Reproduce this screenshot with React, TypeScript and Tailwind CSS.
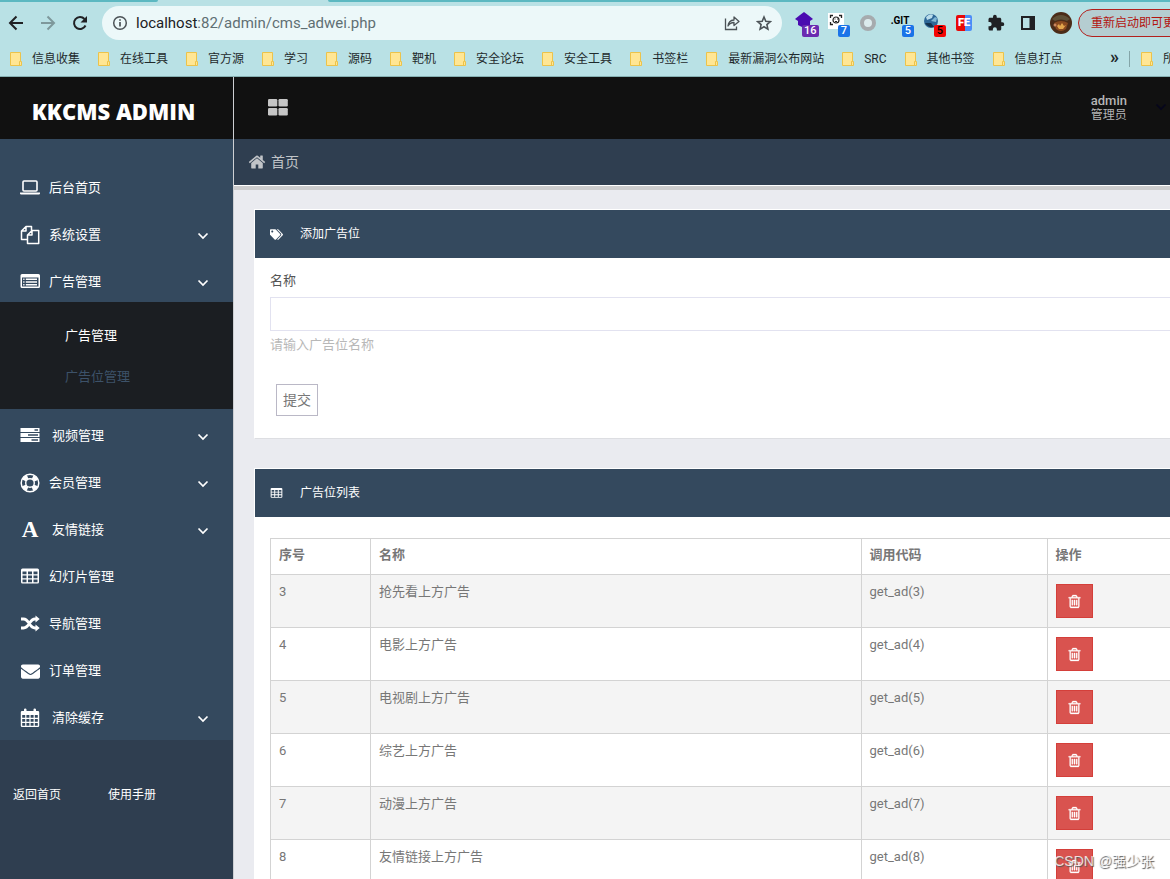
import { ReactNode } from "react";
import { FaEnvelope, FaTags } from "react-icons/fa";

const bookmarks = [
  "信息收集",
  "在线工具",
  "官方源",
  "学习",
  "源码",
  "靶机",
  "安全论坛",
  "安全工具",
  "书签栏",
  "最新漏洞公布网站",
  "SRC",
  "其他书签",
  "信息打点",
];

const ads = [
  { id: 3, name: "抢先看上方广告" },
  { id: 4, name: "电影上方广告" },
  { id: 5, name: "电视剧上方广告" },
  { id: 6, name: "综艺上方广告" },
  { id: 7, name: "动漫上方广告" },
  { id: 8, name: "友情链接上方广告" },
];

/* Icons */

function LaptopIcon() {
  return (
    <svg width="20" height="20" viewBox="0 0 20 20" fill="none">
      <rect x="3" y="3" width="14" height="10" rx="1" stroke="currentColor" strokeWidth="1.6" />
      <path d="M0 14.500h20v1q0 1-1.200 1H1.200Q0 16.500 0 15.500z" fill="currentColor" />
    </svg>
  );
}

function CopyIcon() {
  return (
    <svg width="20" height="20" viewBox="0 0 20 20" fill="none" stroke="currentColor" strokeWidth="1.5" strokeLinejoin="round">
      <path d="M7.500 14.500H1.500V6L6 1.500h5.500v4M6 1.500V6H1.500" />
      <path d="M7.500 18.500V10L12 5.500h6.700v13zM12 5.500V10H7.500" />
    </svg>
  );
}

function ListIcon() {
  return (
    <svg width="20" height="20" viewBox="0 0 20 20" fill="currentColor">
      <path
        fillRule="evenodd"
        d="M2 2h16.500Q20 2 20 3.500v11q0 1.500-1.500 1.500H2Q.5 16 .5 14.500v-11Q.5 2 2 2zM2 5.500v9h16.500v-9z"
      />
      <path d="M3.200 6.500h1.300v1.400H3.200zM3.200 9.300h1.300v1.400H3.200zM3.200 12h1.300v1.400H3.200zM5.800 6.500H17v1.400H5.800zM5.800 9.300H17v1.400H5.800zM5.800 12H17v1.400H5.800z" />
    </svg>
  );
}

function ServerIcon() {
  return (
    <svg width="20" height="20" viewBox="0 0 20 20" fill="currentColor">
      <path
        fillRule="evenodd"
        d="M.5 2h19v4H.5zM14.500 3.300v1.400H18V3.300zM.5 7h19v4H.5zM8 8.300v1.400h10V8.300zM.5 12h19v4H.5zM11.500 13.300v1.400H18v-1.400z"
      />
    </svg>
  );
}

function LifeRingIcon() {
  return (
    <svg width="20" height="20" viewBox="0 0 20 20" fill="none" stroke="currentColor">
      <circle cx="10" cy="10" r="8.800" strokeWidth="1.500" />
      <circle cx="10" cy="10" r="4.300" strokeWidth="1.400" />
      <circle cx="10" cy="10" r="6.600" strokeWidth="4" strokeDasharray="5.180 5.180" strokeDashoffset="-2.590" />
    </svg>
  );
}

function ShuffleIcon() {
  return (
    <svg width="20" height="20" viewBox="0 0 20 20" fill="none">
      <path d="M1 5h2.500C9.500 5 9 14 15 14h1.500M1 14h2.500C9.500 14 9 5 15 5h1.500" stroke="currentColor" strokeWidth="2.800" />
      <path d="M15.500 1.500L19.700 5l-4.200 3.500zM15.500 10.500l4.200 3.500-4.200 3.500z" fill="currentColor" />
    </svg>
  );
}

function TableIcon({ size = 20 }: { size?: number }) {
  return (
    <svg width={size} height={size} viewBox="0 0 20 20" fill="currentColor">
      <path
        fillRule="evenodd"
        d="M2.500 1.500h15Q19 1.500 19 3v12q0 1.500-1.500 1.500h-15Q1 16.500 1 15V3Q1 1.500 2.500 1.500zM2.500 4.500v2.700H6.500V4.500zM8 4.500v2.700h4V4.500zM13.500 4.500v2.700h4V4.500zM2.500 8.500v2.700H6.500V8.500zM8 8.500v2.700h4V8.500zM13.500 8.500v2.700h4V8.500zM2.500 12.500v2.700H6.500V12.500zM8 12.500v2.700h4V12.500zM13.500 12.500v2.700h4V12.500z"
      />
    </svg>
  );
}

function CalendarIcon() {
  return (
    <svg width="20" height="20" viewBox="0 0 20 20" fill="currentColor">
      <path
        fillRule="evenodd"
        d="M2 3h2V1.500Q4 .5 5.200.5T6.500 1.500V3h7V1.500q0-1 1.200-1T16 1.500V3h2q1.200 0 1.200 1.200v13.600Q19.200 19 18 19H2Q.8 19 .8 17.800V4.200Q.8 3 2 3zM2.200 7v2.800h3V7zM6.400 7v2.800h3V7zM10.600 7v2.800h3V7zM14.800 7v2.800h3V7zM2.200 11v2.800h3V11zM6.400 11v2.800h3V11zM10.600 11v2.800h3V11zM14.800 11v2.800h3V11zM2.200 15v2.700h3V15zM6.400 15v2.700h3V15zM10.600 15v2.700h3V15zM14.800 15v2.700h3V15z"
      />
    </svg>
  );
}

function AngleDown({ className = "" }: { className?: string }) {
  return (
    <svg width="16" height="16" viewBox="0 0 16 16" fill="none" stroke="currentColor" strokeWidth="1.700" className={className}>
      <path d="M3.500 6.500L8 11l4.500-4.500" />
    </svg>
  );
}

function HomeIcon() {
  return (
    <svg width="18" height="18" viewBox="0 0 1792 1792" fill="currentColor">
      <path d="M1472 992v480q0 26-19 45t-45 19h-384v-384h-256v384h-384q-26 0-45-19t-19-45v-480q0-1 .5-3t.5-3l575-474 575 474q1 2 1 6zm223-69l-62 74q-8 9-21 11h-3q-13 0-21-7l-692-577-692 577q-12 8-24 7-13-2-21-11l-62-74q-8-10-7-23.500t11-21.500l719-599q32-26 76-26t76 26l244 204v-195q0-14 9-23t23-9h192q14 0 23 9t9 23v408l219 182q10 8 11 21.500t-7 23.500z" />
    </svg>
  );
}

function TrashIcon() {
  return (
    <svg width="15" height="15" viewBox="0 0 1792 1792" fill="currentColor" stroke="currentColor" strokeWidth="40">
      <path d="M704 736v576q0 14-9 23t-23 9h-64q-14 0-23-9t-9-23v-576q0-14 9-23t23-9h64q14 0 23 9t9 23zm256 0v576q0 14-9 23t-23 9h-64q-14 0-23-9t-9-23v-576q0-14 9-23t23-9h64q14 0 23 9t9 23zm256 0v576q0 14-9 23t-23 9h-64q-14 0-23-9t-9-23v-576q0-14 9-23t23-9h64q14 0 23 9t9 23zm128 724v-948h-896v948q0 22 7 40.500t14.500 27 10.500 8.500h832q3 0 10.500-8.500t14.500-27 7-40.500zm-672-1076h448l-48-117q-7-9-17-11h-317q-10 2-17 11zm928 32v64q0 14-9 23t-23 9h-96v948q0 83-47 143.500t-113 60.500h-832q-66 0-113-58.500t-47-141.500v-952h-96q-14 0-23-9t-9-23v-64q0-14 9-23t23-9h309l70-167q15-37 54-63t79-26h320q40 0 79 26t54 63l70 167h309q14 0 23 9t9 23z" />
    </svg>
  );
}

function FolderIcon() {
  return (
    <svg width="12" height="14" viewBox="0 0 12 14" className="shrink-0">
      <path d="M.5.5h10v9h1v4H.5z" fill="#ffe694" stroke="#ecc34a" />
      <path d="M9.500 13V9.500h1" fill="none" stroke="#ecc34a" />
    </svg>
  );
}

/* Browser bars */

function Badge({ children, className }: { children: ReactNode; className: string }) {
  return (
    <span
      className={`absolute top-3 left-2 h-3 px-0.5 rounded-xs text-[11px] leading-3 font-medium text-center font-['Roboto'] ${className}`}
    >
      {children}
    </span>
  );
}

function Extensions() {
  return (
    <div className="flex items-center gap-3 w-[376px] ml-3 shrink-0 overflow-hidden">
      <button aria-label="Layers" className="relative w-5 h-7 pb-1 shrink-0">
        <svg width="20" height="20" viewBox="0 0 20 20" fill="#4a0bb0">
          <path d="M10 1l4 3 5 4-3 2v4l-6 3-6-3v-4L1 8l5-4z" />
        </svg>
        <Badge className="mt-1 min-w-4 bg-[#6a2bb0] text-white">16</Badge>
      </button>
      <button aria-label="Capture" className="relative w-5 h-7 pb-1 shrink-0">
        <svg width="18" height="18" viewBox="0 0 18 18" fill="none" stroke="#222">
          <rect x="2" width="16" height="16" y="1" fill="#fff" stroke="none" />
          <path d="M4.500 6V3.500H7M13 3.500h2.500V6M4.500 10v2.500H7" strokeWidth="1.300" />
          <circle cx="10" cy="8" r="3" strokeWidth="1.200" />
          <path d="M8.500 7h1M11 7h1M9 9.500h2" />
        </svg>
        <Badge className="mt-1 ml-1 min-w-3 bg-[#1a73e8] text-white">7</Badge>
      </button>
      <button aria-label="Ring" className="w-4 h-4 mx-0.5 shrink-0 rounded-full border-4 border-[#a6abae] bg-[#dcebed]" />
      <button
        aria-label="Git"
        className="relative w-5 h-7 pb-1 shrink-0 text-[10px] leading-5 font-bold text-black font-['Roboto']"
      >
        .GIT
        <Badge className="mt-1 ml-1 min-w-3 bg-[#1a73e8] text-white">5</Badge>
      </button>
      <button aria-label="Globe" className="relative w-5 h-7 pb-1 shrink-0">
        <svg width="18" height="18" viewBox="0 0 18 18">
          <circle cx="9" cy="9" r="7" fill="#2d6797" />
          <path d="M4 5q4-4 7-2l-1 3-5 2z" fill="#b9ddeb" />
          <path d="M9 9l5 1 1-4-2-1z" fill="#7fb6d4" />
          <path d="M3 11q3 5 9 4l-3-4z" fill="#123451" />
        </svg>
        <Badge className="mt-1 ml-1 min-w-3 bg-[#f50505] text-black">5</Badge>
      </button>
      <button
        aria-label="FE"
        className="w-4 h-4 mx-0.5 shrink-0 rounded-xs bg-linear-to-r from-[#e80808] from-55% to-[#4a8df8] to-55% text-[11px] leading-4 font-black text-white font-['Roboto']"
      >
        FE
      </button>
      <button aria-label="Extensions" className="flex justify-center w-5 shrink-0 text-[#202124]">
        <svg width="18" height="18" viewBox="0 0 24 24" fill="currentColor">
          <path d="M20.500 11H19V7c0-1.100-.9-2-2-2h-4V3.500a2.500 2.500 0 0 0-5 0V5H4c-1.100 0-2 .9-2 2v3.800h1.500a2.700 2.700 0 0 1 0 5.400H2V20c0 1.100.9 2 2 2h3.800v-1.500a2.700 2.700 0 0 1 5.400 0V22H17c1.100 0 2-.9 2-2v-4h1.500a2.500 2.500 0 0 0 0-5z" />
        </svg>
      </button>
      <button aria-label="Side panel" className="flex justify-center w-5 shrink-0 text-[#202124]">
        <svg width="16" height="16" viewBox="0 0 16 16">
          <path fillRule="evenodd" d="M1 1h14v14H1zM3 3v10h6.500V3z" fill="currentColor" />
        </svg>
      </button>
      <button aria-label="Profile" className="w-[22px] h-[22px] shrink-0">
        <svg width="22" height="22" viewBox="0 0 22 22">
          <circle cx="11" cy="11" r="11" fill="#4b2c18" />
          <path d="M2 7q9-8 18 0l-3 2q-6-3-12 0z" fill="#5f5037" />
          <path d="M4 11q7-4 14 0l-2 6q-5 4-10 0z" fill="#8a4a20" />
          <path d="M7 14l2-2 1 2 2-3 2 3 2-1-3 4H9z" fill="#e3a64c" />
          <circle cx="5" cy="13" r="1.500" fill="#c98760" />
        </svg>
      </button>
      <button className="h-7 -ml-1.5 px-3 shrink-0 rounded-full border border-[#b3201d] bg-[#b5cdd1] text-xs text-[#b3140f] whitespace-nowrap">
        重新启动即可更新
      </button>
    </div>
  );
}

function BrowserBar() {
  return (
    <div className="shrink-0 bg-[#b9e1e5] border-b border-[#86b0b2]">
      <div className="flex justify-between h-0.5 bg-[#b9e1e5]">
        <div className="w-[158px] bg-[#5cb8c1] rounded-br" />
        <div className="w-[72%] bg-[#5cb8c1] rounded-bl" />
      </div>
      <div className="flex items-center h-10 pt-0.5 pl-2 text-[#202124]">
        <button aria-label="Back" className="w-4 h-4">
          <svg width="16" height="16" viewBox="0 0 16 16" fill="none" stroke="currentColor" strokeWidth="2">
            <path d="M15 8H2.500M8.500 1.500L2 8l6.500 6.500" />
          </svg>
        </button>
        <button aria-label="Forward" className="w-4 h-4 ml-4 text-[#7e989b]">
          <svg width="16" height="16" viewBox="0 0 16 16" fill="none" stroke="currentColor" strokeWidth="2">
            <path d="M1 8h12.500M7.500 1.500L14 8l-6.500 6.500" />
          </svg>
        </button>
        <button aria-label="Reload" className="w-4 h-4 ml-4">
          <svg width="16" height="16" viewBox="0 0 16 16" fill="none">
            <path d="M13.500 10.500A6 6 0 1 1 12.500 4" stroke="currentColor" strokeWidth="2" />
            <path d="M15 1v6.500H8.500z" fill="currentColor" />
          </svg>
        </button>
        <div className="flex items-center flex-1 min-w-0 h-[34px] ml-3.5 px-2.5 rounded-full bg-[#ecf8f9]">
          <svg width="16" height="16" viewBox="0 0 16 16" fill="none" stroke="#4c5357" strokeWidth="1.500" className="shrink-0">
            <circle cx="8" cy="8" r="6.300" />
            <path d="M8 7v4.500M8 4.300v1.500" strokeWidth="1.700" />
          </svg>
          <p className="flex-1 ml-2 text-[15px] leading-5 text-[#5f6f73] font-['Roboto']">
            <span className="text-[#202124]">localhost</span>:82/admin/cms_adwei.php
          </p>
          <button aria-label="Share" className="w-4 h-4">
            <svg width="16" height="16" viewBox="0 0 16 16" fill="none" stroke="#4c5357" strokeWidth="1.300">
              <path d="M1.500 3.500v11h11v-3" />
              <path d="M4 11q.5-5.500 6-6V2l5 4.500-5 4v-3Q6 7.500 4 11z" strokeLinejoin="round" />
            </svg>
          </button>
          <button aria-label="Bookmark" className="w-4 h-4 ml-4">
            <svg width="16" height="16" viewBox="0 0 16 16" fill="none" stroke="#4c5357" strokeWidth="1.600">
              <path d="M8 2l1.800 4.200 4.500.4-3.400 3 1 4.500L8 11.700l-3.900 2.400 1-4.500-3.400-3 4.500-.4z" />
            </svg>
          </button>
        </div>
        <Extensions />
      </div>
      <div className="flex items-center h-[34px] pb-px pl-2.5 text-xs text-[#1f2a2c] whitespace-nowrap">
        <div className="flex gap-[18px]">
          {bookmarks.map((label) => (
            <a key={label} href="#" className="flex items-center gap-2.5">
              <FolderIcon />
              {label}
            </a>
          ))}
        </div>
        <button aria-label="More bookmarks" className="ml-auto pb-1 text-lg leading-4 font-bold">
          »
        </button>
        <a href="#" className="flex items-center gap-2.5 w-[41px] ml-2.5 pl-[11px] border-l border-[#84a5a8]">
          <FolderIcon />
          所有书签
        </a>
      </div>
    </div>
  );
}

/* Admin page */

interface NavItemProps {
  icon: ReactNode;
  label: string;
  more?: boolean;
  wide?: boolean;
  children?: ReactNode;
}

function NavItem({ icon, label, more, wide, children }: NavItemProps) {
  return (
    <li className="pt-[7px]">
      <a href="#" className="flex items-center h-10 pl-5 pr-[22px] text-[13px] text-white">
        <span className="flex items-center justify-center w-5">{icon}</span>
        <span className={wide ? "ml-3" : "ml-[9px]"}>{label}</span>
        {more && <AngleDown className="ml-auto" />}
      </a>
      {children}
    </li>
  );
}

function Sidebar() {
  return (
    <aside className="flex flex-col w-[234px] shrink-0 border-r border-[#cdcfd3] bg-[#2f3e50]">
      <div className="flex items-center justify-center h-[62px] pt-1.5 pr-1.5 bg-[#111] text-white text-[22px] font-extrabold font-['Open_Sans']">
        KKCMS ADMIN
      </div>
      <nav className="pt-[22px] pb-0.5 bg-[#34495e]">
        <ul>
          <NavItem icon={<LaptopIcon />} label="后台首页" />
          <NavItem icon={<CopyIcon />} label="系统设置" more />
          <NavItem icon={<ListIcon />} label="广告管理" more>
            <ul className="pt-[13px] pb-3 pl-[65px] bg-[#1b1e22] text-[13px] leading-[41px]">
              <li>
                <a href="#" className="block text-white">
                  广告管理
                </a>
              </li>
              <li>
                <a href="#" className="block text-[#3d5269]">
                  广告位管理
                </a>
              </li>
            </ul>
          </NavItem>
          <NavItem icon={<ServerIcon />} label="视频管理" more wide />
          <NavItem icon={<LifeRingIcon />} label="会员管理" more />
          <NavItem
            icon={<span className="text-[23px] leading-8 font-bold font-['Liberation_Serif']">A</span>}
            label="友情链接"
            more
            wide
          />
          <NavItem icon={<TableIcon />} label="幻灯片管理" />
          <NavItem icon={<ShuffleIcon />} label="导航管理" />
          <NavItem icon={<FaEnvelope size={19} />} label="订单管理" />
          <NavItem icon={<CalendarIcon />} label="清除缓存" more wide />
        </ul>
      </nav>
      <div className="flex gap-[47px] pt-[46px] pl-[13px] text-xs leading-[18px] text-white">
        <a href="#">返回首页</a>
        <a href="#">使用手册</a>
      </div>
    </aside>
  );
}

function Panel({ icon, title, children }: { icon: ReactNode; title: string; children: ReactNode }) {
  return (
    <section className="border-t border-l border-b border-t-white border-l-white border-b-[#dddee2] bg-white">
      <h3 className="flex items-center h-12 pl-[15px] gap-4 bg-[#34495e] text-xs text-white">
        <span className="w-3.5">{icon}</span>
        {title}
      </h3>
      {children}
    </section>
  );
}

export default function App() {
  return (
    <div className="relative flex flex-col h-screen overflow-hidden font-['Roboto','Noto_Sans_CJK_SC',sans-serif]">
      <BrowserBar />

      <div className="flex flex-1 min-h-0">
        <Sidebar />

        <div className="flex-1 min-w-0 bg-[#eaebf0]">
          <header className="flex items-center justify-between h-[62px] pb-0.5 pl-[34px] bg-[#111]">
            <button aria-label="Menu" className="text-[#c6c6c6]">
              <svg width="20" height="17" viewBox="0 0 20 17" fill="currentColor">
                <rect width="9.300" height="7.500" rx="1.200" />
                <rect x="10.500" width="9.300" height="7.500" rx="1.200" />
                <rect y="9" width="9.300" height="7.500" rx="1.200" />
                <rect x="10.500" y="9" width="9.300" height="7.500" rx="1.200" />
              </svg>
            </button>
            <button className="flex items-center gap-[26px] pt-0.5 pr-px text-left text-xs leading-3.5 text-[#b5b5b5]">
              <span>
                <strong className="block text-[13px] leading-3.5 font-medium">admin</strong>
                管理员
              </span>
              <AngleDown className="mb-1 text-[#05051c]" />
            </button>
          </header>

          <div className="flex items-center gap-[5px] h-[47px] pl-3.5 border-b border-white bg-[#2f3e50] text-sm text-[#c1c4c8]">
            <HomeIcon />
            <a href="#">首页</a>
          </div>

          <main className="flex flex-col gap-[29px] pt-[19px] pl-5 border-t-4 border-[#cccccd] text-[13px] text-[#777]">
            <Panel icon={<FaTags size={13} />} title="添加广告位">
              <form className="flex flex-col pt-[13px] pl-[15px] pb-[22px] leading-5">
                <label htmlFor="ad-name" className="text-[#555]">
                  名称
                </label>
                <input id="ad-name" className="h-[34px] mt-1.5 border border-r-0 border-[#e2e2f0] bg-white outline-none" />
                <p className="mt-1 text-[#b8b8b8]">请输入广告位名称</p>
                <button type="submit" className="self-start h-8 mt-[29px] ml-1.5 px-1.5 border border-[#bab8c6] text-sm text-[#777]">
                  提交
                </button>
              </form>
            </Panel>

            <Panel icon={<TableIcon size={13} />} title="广告位列表">
              <div className="pt-[21px] pl-[15px]">
                <table className="w-full border-collapse text-left leading-[18px]">
                  <thead>
                    <tr>
                      <th className="w-[100px] h-9 px-2 pb-[3px] border border-[#d3d3d3]">序号</th>
                      <th className="px-2 pb-[3px] border border-[#d3d3d3]">名称</th>
                      <th className="w-[186px] px-2 pb-[3px] border border-[#d3d3d3]">调用代码</th>
                      <th className="w-[123px] px-2 pb-[3px] border border-r-0 border-[#d3d3d3]">操作</th>
                    </tr>
                  </thead>
                  <tbody>
                    {ads.map((ad) => (
                      <tr key={ad.id} className="align-top odd:bg-[#f4f4f4]">
                        <td className="h-[53px] p-2 border border-[#d3d3d3]">{ad.id}</td>
                        <td className="p-2 border border-[#d3d3d3]">{ad.name}</td>
                        <td className="p-2 border border-[#d3d3d3]">get_ad({ad.id})</td>
                        <td className="px-2 pt-[9px] border border-r-0 border-[#d3d3d3]">
                          <button
                            aria-label="删除"
                            className="flex items-center justify-center w-[37px] h-[34px] border border-[#d43f3a] bg-[#d9534f] text-white"
                          >
                            <TrashIcon />
                          </button>
                        </td>
                      </tr>
                    ))}
                  </tbody>
                </table>
              </div>
            </Panel>
          </main>
        </div>
      </div>

      <p className="absolute right-4 bottom-2 text-sm leading-5 text-white/80 font-['Liberation_Sans','Noto_Sans_CJK_SC',sans-serif] [text-shadow:1px_1px_1px_#555]">
        CSDN @强少张
      </p>
    </div>
  );
}
